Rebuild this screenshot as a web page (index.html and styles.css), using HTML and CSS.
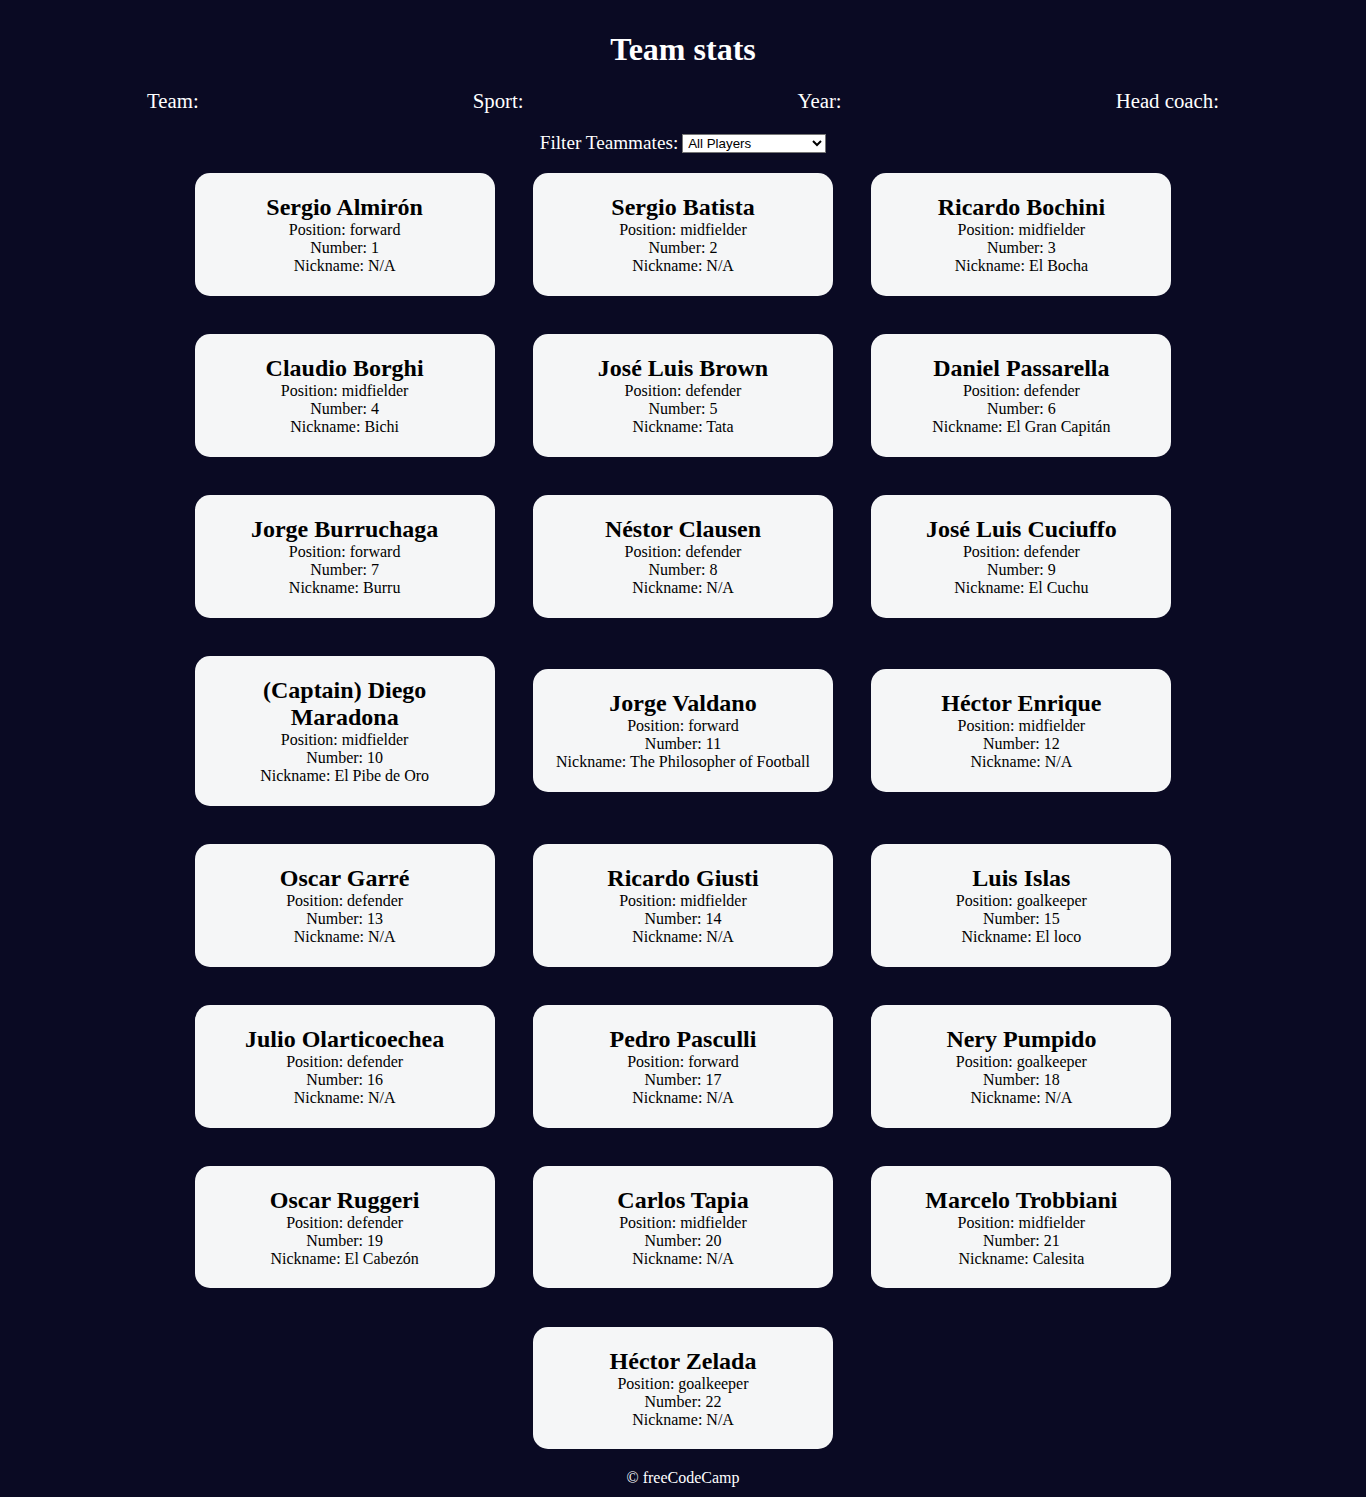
FILE: index.html
```html
<!DOCTYPE html>
<html lang="en">
<head>
<meta charset="UTF-8">
<title>Team stats</title>
<link rel="stylesheet" href="styles.css">
</head>
<body>
<div class="title-container">
  <h1 class="title">Team stats</h1>
  <main>
    <div class="team-stats">
      <p>Team: <span id="team"></span></p>
      <p>Sport: <span id="sport"></span></p>
      <p>Year: <span id="year"></span></p>
      <p>Head coach: <span id="head-coach"></span></p>
    </div>
  </main>
</div>
<div class="options-line">
<label class="options-label" for="players">Filter Teammates:</label>
<select name="players" id="players" class="players-select">
  <option value="all">All Players</option>
  <option value="nickname">Nicknames</option>
  <option value="forward">Position Forward</option>
  <option value="midfielder">Position Midfielder</option>
  <option value="defender">Position Defender</option>
  <option value="goalkeeper">Position Goalkeeper</option>
</select>
</div>
<div class="player-cards" id="player-cards">
  <div class="player-card"><h2>Sergio Almirón</h2><p>Position: forward</p><p>Number: 1</p><p>Nickname: N/A</p></div>
  <div class="player-card"><h2>Sergio Batista</h2><p>Position: midfielder</p><p>Number: 2</p><p>Nickname: N/A</p></div>
  <div class="player-card"><h2>Ricardo Bochini</h2><p>Position: midfielder</p><p>Number: 3</p><p>Nickname: El Bocha</p></div>
  <div class="player-card"><h2>Claudio Borghi</h2><p>Position: midfielder</p><p>Number: 4</p><p>Nickname: Bichi</p></div>
  <div class="player-card"><h2>José Luis Brown</h2><p>Position: defender</p><p>Number: 5</p><p>Nickname: Tata</p></div>
  <div class="player-card"><h2>Daniel Passarella</h2><p>Position: defender</p><p>Number: 6</p><p>Nickname: El Gran Capitán</p></div>
  <div class="player-card"><h2>Jorge Burruchaga</h2><p>Position: forward</p><p>Number: 7</p><p>Nickname: Burru</p></div>
  <div class="player-card"><h2>Néstor Clausen</h2><p>Position: defender</p><p>Number: 8</p><p>Nickname: N/A</p></div>
  <div class="player-card"><h2>José Luis Cuciuffo</h2><p>Position: defender</p><p>Number: 9</p><p>Nickname: El Cuchu</p></div>
  <div class="player-card"><h2>(Captain) Diego Maradona</h2><p>Position: midfielder</p><p>Number: 10</p><p>Nickname: El Pibe de Oro</p></div>
  <div class="player-card"><h2>Jorge Valdano</h2><p>Position: forward</p><p>Number: 11</p><p>Nickname: The Philosopher of Football</p></div>
  <div class="player-card"><h2>Héctor Enrique</h2><p>Position: midfielder</p><p>Number: 12</p><p>Nickname: N/A</p></div>
  <div class="player-card"><h2>Oscar Garré</h2><p>Position: defender</p><p>Number: 13</p><p>Nickname: N/A</p></div>
  <div class="player-card"><h2>Ricardo Giusti</h2><p>Position: midfielder</p><p>Number: 14</p><p>Nickname: N/A</p></div>
  <div class="player-card"><h2>Luis Islas</h2><p>Position: goalkeeper</p><p>Number: 15</p><p>Nickname: El loco</p></div>
  <div class="player-card"><h2>Julio Olarticoechea</h2><p>Position: defender</p><p>Number: 16</p><p>Nickname: N/A</p></div>
  <div class="player-card"><h2>Pedro Pasculli</h2><p>Position: forward</p><p>Number: 17</p><p>Nickname: N/A</p></div>
  <div class="player-card"><h2>Nery Pumpido</h2><p>Position: goalkeeper</p><p>Number: 18</p><p>Nickname: N/A</p></div>
  <div class="player-card"><h2>Oscar Ruggeri</h2><p>Position: defender</p><p>Number: 19</p><p>Nickname: El Cabezón</p></div>
  <div class="player-card"><h2>Carlos Tapia</h2><p>Position: midfielder</p><p>Number: 20</p><p>Nickname: N/A</p></div>
  <div class="player-card"><h2>Marcelo Trobbiani</h2><p>Position: midfielder</p><p>Number: 21</p><p>Nickname: Calesita</p></div>
  <div class="player-card"><h2>Héctor Zelada</h2><p>Position: goalkeeper</p><p>Number: 22</p><p>Nickname: N/A</p></div>
</div>
<footer class="footer">&copy; freeCodeCamp</footer>
</body>
</html>
```

FILE: styles.css
```css
*,
*::before,
*::after {
  box-sizing: border-box;
}

:root {
  --dark-grey: #0a0a23;
  --light-grey: #f5f6f7;
  --white: #ffffff;
  --black: #000;
}

body {
  margin: 0;
  padding: 10px;
  background-color: var(--dark-grey);
  text-align: center;
  font-family: "Liberation Serif", "Times New Roman", serif;
  font-size: 16px;
  line-height: 18px;
  color: var(--black);
}

.title {
  color: var(--white);
  font-size: 32px;
  line-height: 37px;
  font-weight: bold;
  margin: 21.44px 0 20.44px;
}

.team-stats {
  display: flex;
  justify-content: space-around;
  flex-wrap: wrap;
  color: var(--white);
  font-size: 20.8px;
  line-height: 24px;
  margin: 0 0 19px;
}

.team-stats p {
  margin: 0;
}

.options-line {
  line-height: 22px;
  height: 22px;
}

.options-label {
  color: var(--white);
  font-size: 19.2px;
}

.players-select {
  font-family: "Liberation Sans", Arial, sans-serif;
  font-size: 13.33px;
  width: 144px;
  height: 19px;
  vertical-align: 1px;
  background: #fff;
  color: #000;
  border: 1px solid #767676;
  border-radius: 0;
  padding: 0 0 0 1px;
}

.player-cards {
  display: flex;
  flex-wrap: wrap;
  justify-content: center;
  align-items: center;
  margin: 0;
}

.player-card {
  background-color: var(--light-grey);
  padding: 20.8px;
  margin: 19.2px;
  border-radius: 15px;
  width: 300px;
}

.player-card h2 {
  margin: 0;
  font-size: 24px;
  line-height: 27px;
  font-weight: bold;
}

.player-card p {
  margin: 0;
  font-size: 16px;
  line-height: 18px;
}

.footer {
  color: var(--white);
  font-size: 16px;
  line-height: 18px;
}
```
